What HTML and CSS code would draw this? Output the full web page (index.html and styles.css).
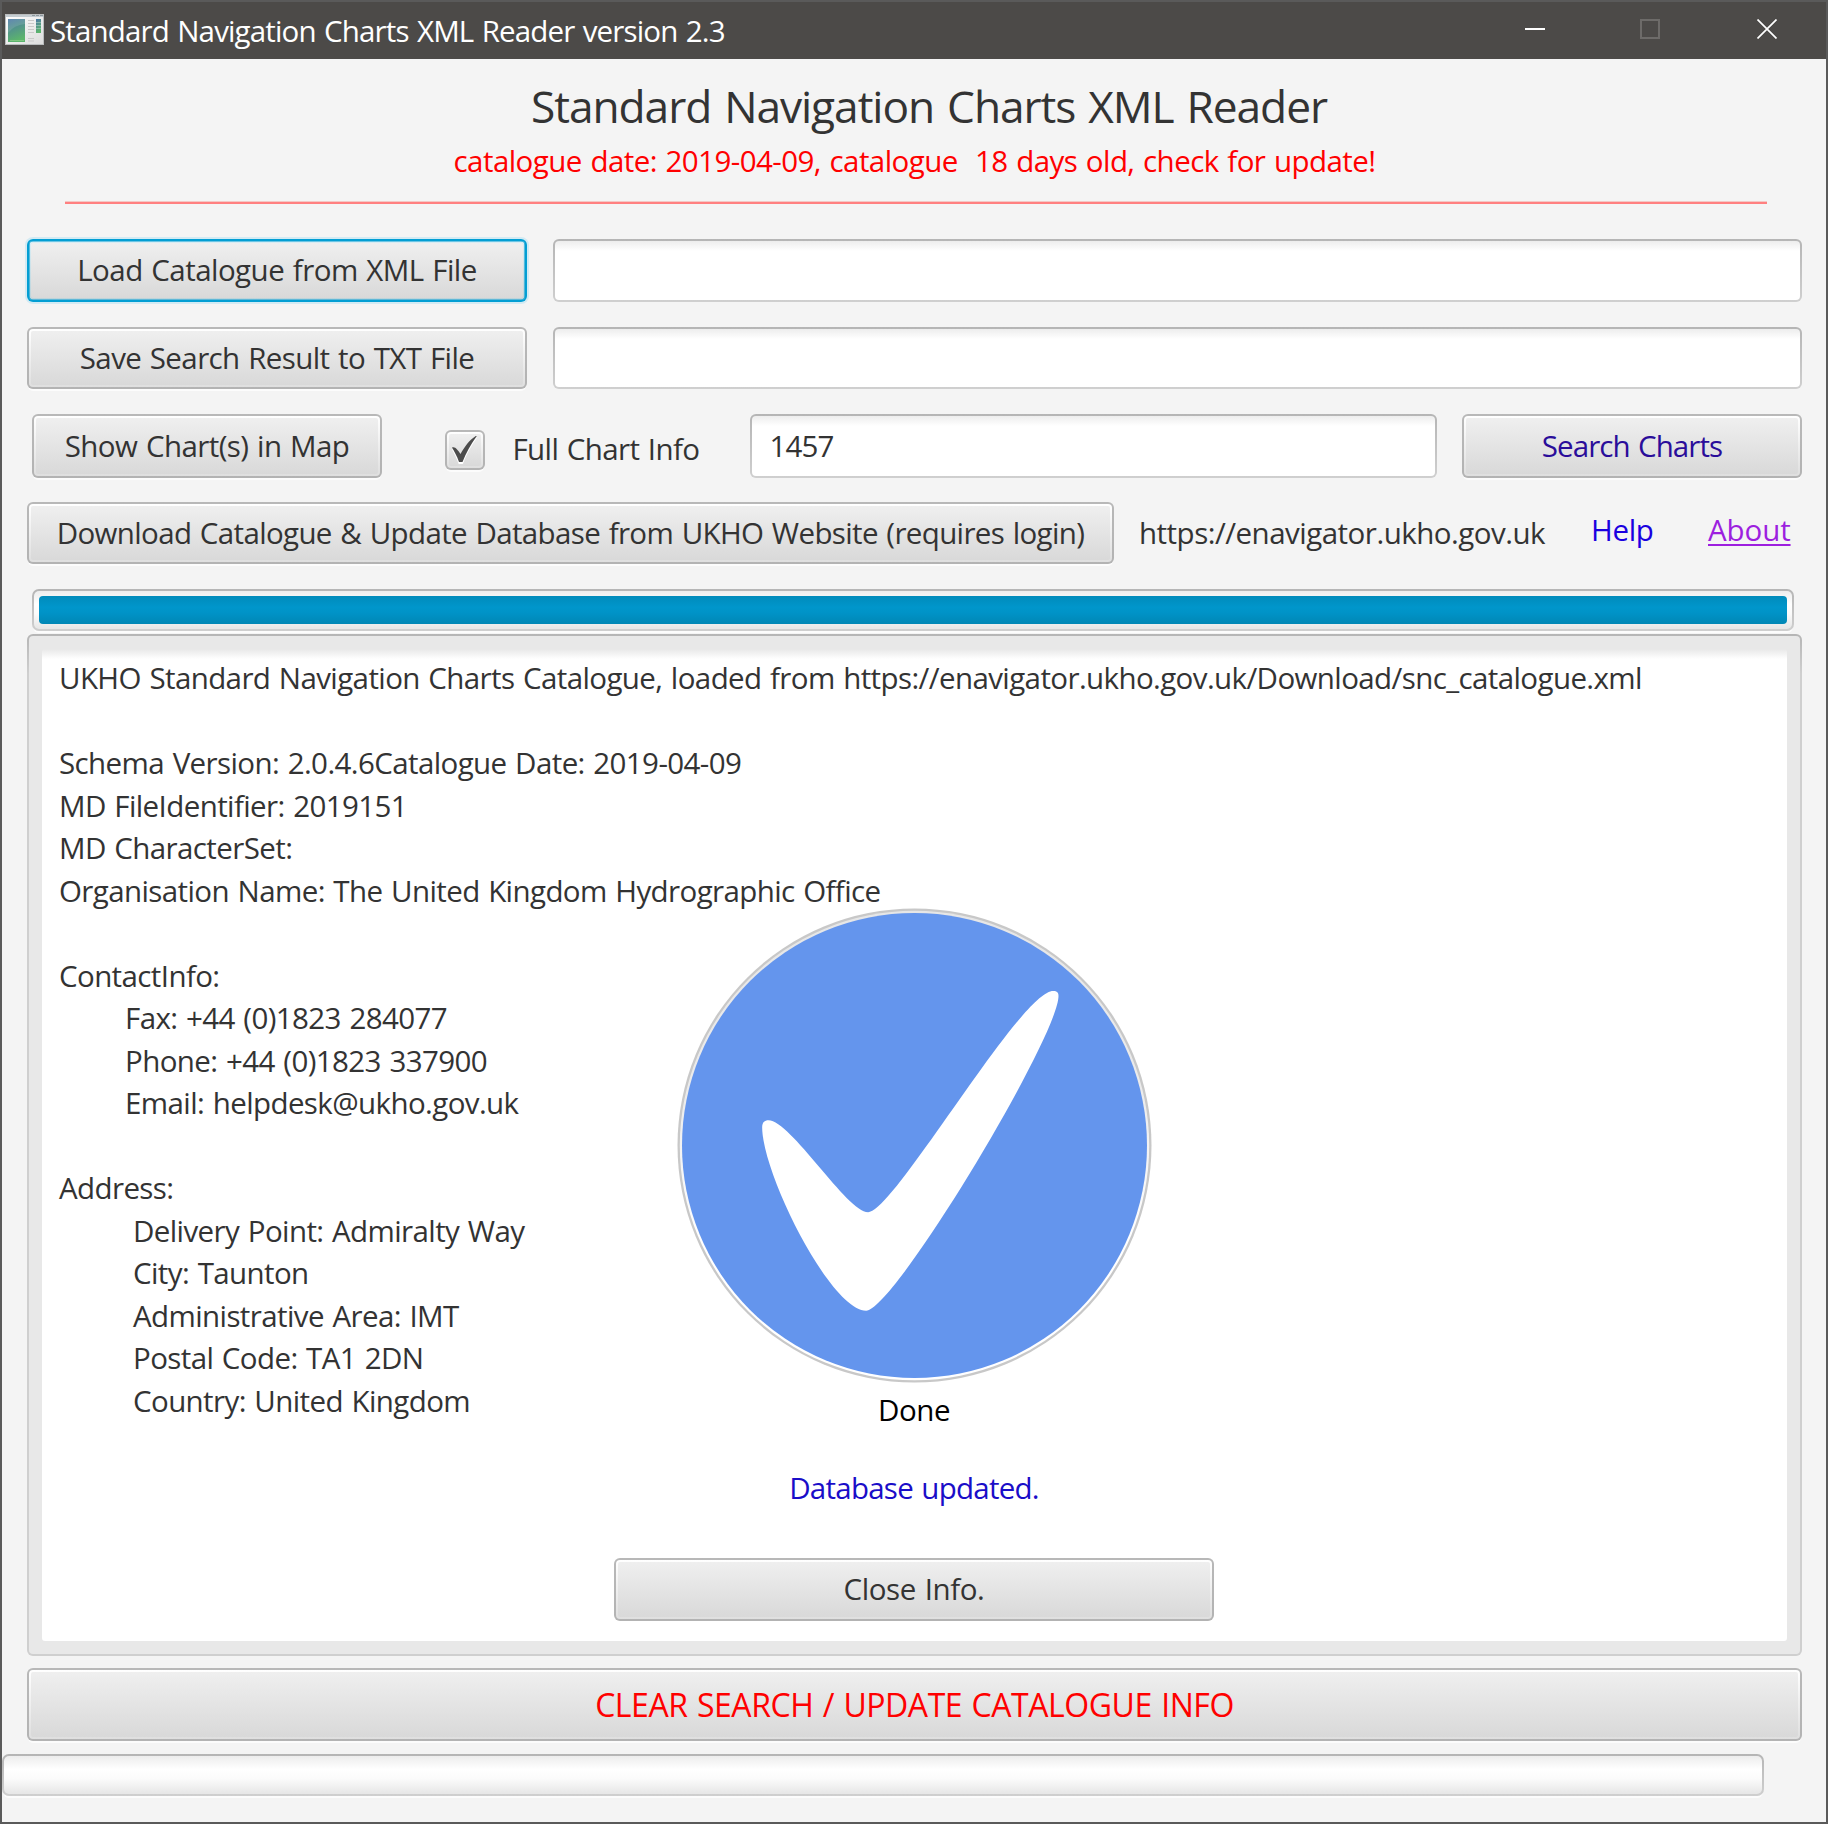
FILE: index.html
```html
<!DOCTYPE html>
<html lang="en">
<head>
<meta charset="utf-8">
<title>Standard Navigation Charts XML Reader</title>
<link rel="stylesheet" href="styles.css">
</head>
<body>
<div class="window">
  <header class="titlebar">
    <svg class="app-icon" width="40" height="32" viewBox="0 0 40 32">
      <defs>
        <linearGradient id="pane" x1="0" y1="0" x2="0.3" y2="1"><stop offset="0" stop-color="#4a76a6"/><stop offset="1" stop-color="#5cb56c"/></linearGradient>
        <linearGradient id="frame" x1="0" y1="0" x2="1" y2="1"><stop offset="0" stop-color="#ffffff"/><stop offset="1" stop-color="#dcdcdc"/></linearGradient>
      </defs>
      <rect x="0.5" y="0.5" width="38" height="30" fill="url(#frame)" stroke="#b9bcbd"/>
      <rect x="1" y="1" width="37" height="2" fill="#c3cbd0"/>
      <path d="M27 1.500h3M31 1.500h3M35 1.500h3" stroke="#8d979d"/>
      <rect x="3" y="5" width="17" height="23" fill="url(#pane)"/>
      <path d="M3 19Q9 11 20 10V5H3Z" fill="#fff" opacity=".12"/>
      <path d="M5 26.500h14" stroke="#8fd08b" opacity=".7"/>
      <path d="M23 6.500h6M23 9.500h6M23 12.500h6M23 15.500h6M23 18.500h6M23 24.500h6M23 27h6" stroke="#c9c9c9"/>
      <rect x="31" y="5" width="5" height="14" fill="url(#pane)"/>
      <path d="M31 8.500h5M31 11.500h5M31 14.500h5" stroke="#a8cdc0" opacity=".6"/>
    </svg>
    <span class="window-title">Standard Navigation Charts XML Reader version 2.3</span>
    <svg class="control" width="20" height="20"><path d="M0 10h20" stroke="#fff" stroke-width="2"/></svg>
    <svg class="control" width="20" height="20"><rect x="1" y="1" width="18" height="18" fill="none" stroke="#6d6b69" stroke-width="2"/></svg>
    <svg class="control" width="20" height="20"><path d="M.5.5l19 19M19.500.5l-19 19" stroke="#fff" stroke-width="1.700"/></svg>
  </header>

  <main class="content">
    <h1 class="heading">Standard Navigation Charts XML Reader</h1>
    <p class="notice">catalogue date: 2019-04-09, catalogue&nbsp; 18 days old, check for update!</p>
    <hr class="rule">

    <div class="row row-file">
      <button class="btn focused t-load">Load Catalogue from XML File</button>
      <div class="field"></div>
    </div>
    <div class="row row-file">
      <button class="btn t-save">Save Search Result to TXT File</button>
      <div class="field"></div>
    </div>
    <div class="row row-search">
      <button class="btn t-show">Show Chart(s) in Map</button>
      <div class="check">
        <span class="box"><svg width="26" height="28" viewBox="0 0 26 28"><path d="M0 11.500C3 10 6 14 8.500 18C13 10 18 3 25.500 -1C19 8 14 17 10.500 27H7C5 21 2.500 16 0 11.500Z" fill="#fff" transform="translate(0 2)"/><path d="M0 11.500C3 10 6 14 8.500 18C13 10 18 3 25.500 -1C19 8 14 17 10.500 26H7C5 20 2.500 16 0 11.500Z" fill="#4c4c4c"/></svg></span>
        <span class="t-full">Full Chart Info</span>
      </div>
      <div class="field t-1457">1457</div>
      <button class="btn search">Search Charts</button>
    </div>
    <div class="row row-download">
      <button class="btn t-download">Download Catalogue &amp; Update Database from UKHO Website (requires login)</button>
      <span class="t-url">https://enavigator.ukho.gov.uk</span>
      <a class="link t-help">Help</a>
      <a class="link visited t-about">About</a>
    </div>

    <div class="progress"><div class="bar"></div></div>

    <section class="area">
      <div class="page">
        <p class="t-l1">UKHO Standard Navigation Charts Catalogue, loaded from https://enavigator.ukho.gov.uk/Download/snc_catalogue.xml</p>
        <p>&nbsp;</p>
        <p>Schema Version: 2.0.4.6Catalogue Date: 2019-04-09</p>
        <p>MD FileIdentifier: 2019151</p>
        <p>MD CharacterSet:</p>
        <p>Organisation Name: The United Kingdom Hydrographic Office</p>
        <p>&nbsp;</p>
        <p>ContactInfo:</p>
        <div class="contact">
          <p>Fax: +44 (0)1823 284077</p>
          <p>Phone: +44 (0)1823 337900</p>
          <p>Email: helpdesk@ukho.gov.uk</p>
        </div>
        <p>&nbsp;</p>
        <p>Address:</p>
        <div class="address">
          <p>Delivery Point: Admiralty Way</p>
          <p>City: Taunton</p>
          <p>Administrative Area: IMT</p>
          <p>Postal Code: TA1 2DN</p>
          <p>Country: United Kingdom</p>
        </div>
      </div>
      <div class="overlay">
        <svg class="done-mark" width="475" height="475" viewBox="0 0 475 475">
          <defs><linearGradient id="ring" x1="0" y1="0" x2="0" y2="1"><stop offset="0" stop-color="#e6e6e6"/><stop offset=".4" stop-color="#ececec"/><stop offset=".7" stop-color="#ffffff"/></linearGradient></defs>
          <circle cx="237.500" cy="237.500" r="237" fill="#c8c8c8"/>
          <circle cx="237.500" cy="237.500" r="234.700" fill="url(#ring)"/>
          <circle cx="237.500" cy="237.500" r="232.500" fill="#6495ed"/>
          <path transform="translate(-16.500 -18) scale(.33333)" fill="#fff" d="M305 712C305 697 312 691 324 691C390 691 560 967 623 967C700 967 1080 303 1178 303C1190 303 1194 308 1194 318C1194 440 700 1262 617 1262C510 1262 305 850 305 712Z"/>
        </svg>
        <span class="done">Done</span>
        <span class="updated">Database updated.</span>
        <button class="btn close">Close Info.</button>
      </div>
    </section>

    <button class="btn clear">CLEAR SEARCH / UPDATE CATALOGUE INFO</button>
    <div class="progress idle"></div>
  </main>
</div>
</body>
</html>
```
FILE: styles.css
```css
* { box-sizing: border-box; margin: 0; padding: 0; }

body {
  font: 29.5px/42.5px "Open Sans", "Noto Sans", sans-serif;
  word-spacing: 1.5px;
  color: #333;
}

.window {
  width: 1828px;
  height: 1824px;
  border: 2px solid #5a5a5a;
  background: #f4f4f4;
  display: flex;
  flex-direction: column;
  overflow: hidden;
  white-space: nowrap;
}

/* title bar */
.titlebar {
  height: 57px;
  flex: none;
  background: #4c4a48;
  color: #fff;
  display: flex;
  align-items: center;
  padding: 0 49px 1px 3px;
}
.app-icon { flex: none; margin-right: 5px; }
.window-title { flex: 1; letter-spacing: -.85px; padding-top: 3px; }
.control { flex: none; margin: 0 0 2px 97px; }
.window-title + .control { margin-left: 0; }
.window-title + .control + .control { margin-left: 95px; }

.content {
  flex: 1;
  padding: 17px 24px 0 25px;
  display: flex;
  flex-direction: column;
}
.heading {
  font-size: 44.25px;
  font-weight: 400;
  line-height: 60px;
  letter-spacing: -1.05px;
  word-spacing: 2.5px;
  text-align: center;
  padding-left: 29px;
}
.notice {
  color: #f00;
  line-height: 40px;
  margin-top: 5px;
  text-align: center;
  letter-spacing: -.56px;
}
.rule {
  border: 0;
  height: 3px;
  margin: 20px 35px 35px 38px;
  background: linear-gradient(#f3c9c6 1px, #ff8080 1px);
}

/* rows of controls */
.row {
  display: grid;
  height: 62.5px;
  margin-bottom: 25px;
  align-items: stretch;
  justify-content: start;
  flex: none;
}
.row-file { grid-template-columns: 500px 1249.5px; column-gap: 25.5px; }
.row-search { grid-template-columns: 350px 367.5px 687px 365.5px; padding-left: 5px; }
.row-search .search { margin-left: 25.5px; }
.row-download { grid-template-columns: 1087px 452px 117px auto; align-items: center; }
.row-download .btn { height: 62.5px; }

.btn, .box {
  border: 2px solid transparent;
  border-radius: 6px;
  padding: 2px;
  background:
    linear-gradient(#efefef, #d9d9d9) content-box,
    linear-gradient(#fff, #dfdfdf) padding-box,
    linear-gradient(#b8b8b8, #b3b3b3) border-box;
  box-shadow: 0 3px 0 -1px rgba(255, 255, 255, .75);
}
.btn {
  display: block;
  font: inherit;
  word-spacing: inherit;
  color: #333;
  text-align: center;
  line-height: 54px;
}
.btn.focused {
  background:
    linear-gradient(#efefef, #d9d9d9) content-box,
    linear-gradient(#d9edf4, #bcd3da) padding-box,
    linear-gradient(#039ed3, #039ed3) border-box;
  box-shadow: 0 0 0 2px #d2eaf3, inset 0 0 0 .6px #039ed3;
}
.field {
  border: 2px solid transparent;
  border-radius: 6px;
  line-height: 60px;
  padding-left: 18px;
  background:
    linear-gradient(#ededed, #fff 10px) padding-box,
    linear-gradient(#b5b5b5, #cfcfcf) border-box;
}
.check { display: flex; align-items: center; padding-left: 62.5px; }
.box {
  width: 40px;
  height: 40px;
  margin: 7px 28px 0 0;
  display: flex;
  align-items: center;
  justify-content: center;
}
.box svg { flex: none; }
.t-full { letter-spacing: -.62px; padding-top: 7px; }

.t-load { letter-spacing: -.54px; }
.t-save { letter-spacing: -.6px; }
.t-show { letter-spacing: -.57px; }
.t-1457 { letter-spacing: -.9px; }
.search { color: #2a0d9a; letter-spacing: -.9px; }
.t-download { letter-spacing: -.64px; }
.t-url { margin-left: 25px; padding-top: 1px; letter-spacing: -.51px; }
.link { color: #1a00e0; padding-bottom: 5px; }
.t-help { margin-left: 25px; letter-spacing: -.3px; }
.visited { color: #9d1fdf; }
.t-about {
  margin-left: 25px;
  letter-spacing: -.1px;
  text-decoration: underline;
  text-decoration-thickness: 2px;
  text-underline-offset: 3px;
}

.progress {
  flex: none;
  height: 42px;
  margin: 0 8px 3px 5px;
  border: 2px solid transparent;
  border-radius: 7px;
  padding: 5px;
  background:
    linear-gradient(#ededed, #fff 35%, #fbfbfb 60%, #e6e6e6) padding-box,
    linear-gradient(#b5b5b5, #cfcfcf) border-box;
  box-shadow: 0 3px 0 -1px rgba(255, 255, 255, .75);
}
.bar {
  height: 28px;
  border-radius: 4px;
  background: linear-gradient(#008bbb, #0096cb 40%, #0093c7 60%, #0087b5);
}

/* text area */
.area {
  flex: none;
  height: 1022px;
  position: relative;
  border: 2px solid transparent;
  border-radius: 6px;
  padding: 13px;
  background:
    linear-gradient(#e8e8e8, #e8e8e8) padding-box,
    linear-gradient(#b5b5b5, #cfcfcf 40px) border-box;
}
.page {
  height: 992px;
  border-radius: 3px;
  padding: 8px 0 0 17px;
  background: linear-gradient(#e8e8e8, #fff 10px);
  letter-spacing: -.6px;
}
.page .t-l1 { letter-spacing: -.605px; }
.contact { padding-left: 66px; }
.address { padding-left: 74px; }

/* completion indicator shown over the text */
.overlay {
  position: absolute;
  top: 272px;
  left: 0;
  right: 1px;
  display: flex;
  flex-direction: column;
  align-items: center;
}
.done-mark { display: block; }
.done { color: #000; margin-top: 6px; letter-spacing: -.4px; }
.updated { color: #1a0dc8; margin-top: 35px; letter-spacing: -.75px; }
.close { width: 600px; height: 62.5px; margin-top: 49px; letter-spacing: -.4px; }

.clear {
  flex: none;
  height: 73px;
  margin: 12px 0 13px;
  color: #f00;
  font-size: 32px;
  line-height: 64px;
  letter-spacing: -.44px;
}
.idle { margin: 0 38px 0 -25px; }
```
